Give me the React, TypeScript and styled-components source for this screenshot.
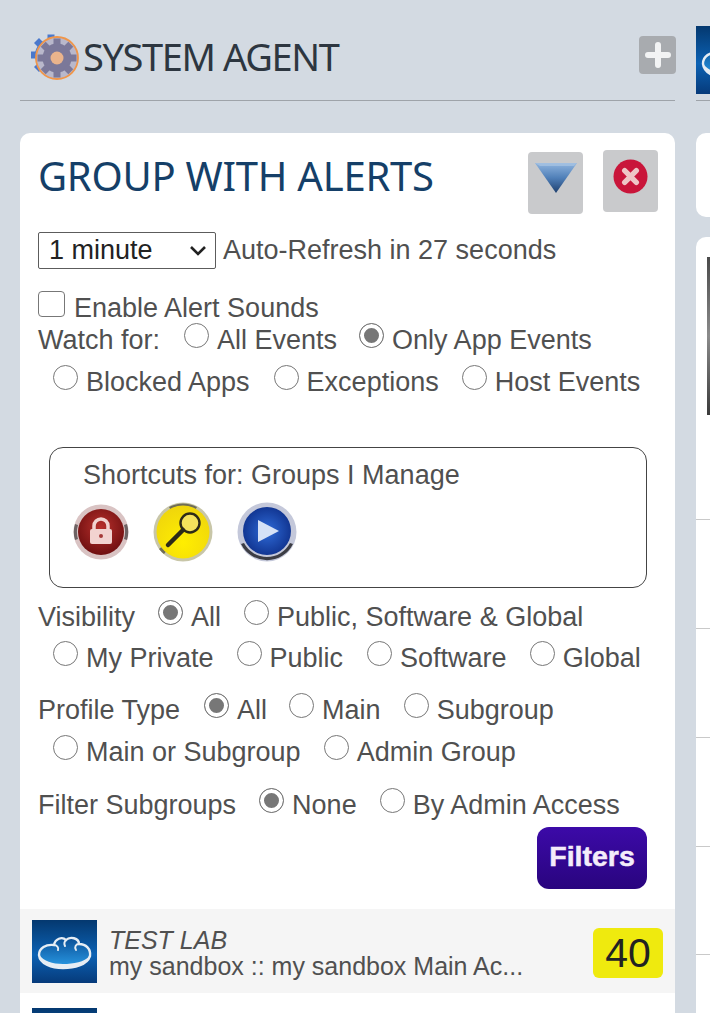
import styled, { createGlobalStyle } from "styled-components";

const GlobalStyle = createGlobalStyle`
  html, body {
    margin: 0;
    background: #d3dae2;
    overflow: hidden;
  }
  * { box-sizing: border-box; }
`;

const TEETH = [0, 45, 90, 135, 180, 225, 270, 315];

function CogIcon() {
  return (
    <svg width="50" height="50" viewBox="0 0 50 50">
      <g fill="#4a78cc">
        <circle cx="20" cy="23" r="16" />
        {TEETH.map(a => (
          <rect key={a} x="16.5" y="2.5" width="7" height="8" transform={`rotate(${a} 20 23)`} />
        ))}
      </g>
      <circle cx="26" cy="26" r="21" fill="#b9b8cb" stroke="#f0964a" strokeWidth="1.8" />
      <g fill="#7b7899">
        <circle cx="26" cy="26" r="14.5" />
        {TEETH.map(a => (
          <rect key={a} x="22.5" y="6.5" width="7" height="7" transform={`rotate(${a} 26 26)`} />
        ))}
      </g>
      <circle cx="26" cy="26" r="6.5" fill="#eab48c" />
    </svg>
  );
}

function PlusIcon() {
  return (
    <svg width="26" height="26" viewBox="0 0 26 26">
      <path d="M13 3v20M3 13h20" stroke="#f2f3f4" strokeWidth="6" strokeLinecap="round" />
    </svg>
  );
}

function TriangleIcon() {
  return (
    <svg width="44" height="32" viewBox="0 0 44 32">
      <defs>
        <linearGradient id="tri" x1="0" y1="0" x2="0" y2="1">
          <stop offset="0" stopColor="#8fb4de" />
          <stop offset=".5" stopColor="#4f7fb8" />
          <stop offset="1" stopColor="#1d3f6e" />
        </linearGradient>
      </defs>
      <path d="M1 1h42L22 31z" fill="url(#tri)" />
      <path d="M1 1h42l-3 3H6z" fill="#a9c4e2" opacity=".7" />
    </svg>
  );
}

function CloseIcon() {
  return (
    <svg width="35" height="35" viewBox="0 0 36 36">
      <circle cx="18" cy="18" r="17.5" fill="#c9153a" />
      <path d="M12 12l12 12M24 12L12 24" stroke="#eec6c6" strokeWidth="5.5" strokeLinecap="round" />
    </svg>
  );
}

function LockIcon() {
  return (
    <svg width="56" height="56" viewBox="0 0 56 56">
      <defs>
        <radialGradient id="red" cx=".5" cy=".4" r=".6">
          <stop offset="0" stopColor="#b8302c" />
          <stop offset="1" stopColor="#6f0f10" />
        </radialGradient>
      </defs>
      <circle cx="28" cy="28" r="27.5" fill="#d9c3c3" />
      <path d="M2 36a27 27 0 0 1 0-16l3 1a24 24 0 0 0 0 14zM54 36a27 27 0 0 0 0-16l-3 1a24 24 0 0 1 0 14z" fill="#6c6263" />
      <circle cx="28" cy="28" r="23" fill="url(#red)" />
      <path d="M21 27v-5a7 7 0 0 1 14 0v5" fill="none" stroke="#f2d3d0" strokeWidth="3.5" />
      <rect x="17" y="25" width="22" height="15" rx="2" fill="#f2d3d0" />
      <circle cx="28" cy="32" r="2" fill="#a53a38" />
    </svg>
  );
}

function SearchIcon() {
  return (
    <svg width="60" height="60" viewBox="0 0 60 60">
      <defs>
        <radialGradient id="yel" cx=".5" cy=".7" r=".7">
          <stop offset="0" stopColor="#ffee00" />
          <stop offset="1" stopColor="#efd50c" />
        </radialGradient>
      </defs>
      <circle cx="30" cy="30" r="29.5" fill="#c8c6a8" />
      <path d="M16 5a29 29 0 0 1 28 0l-1.500 2.500a26 26 0 0 0-25 0zM6 47a29 29 0 0 0 5 5l2-2.500a26 26 0 0 1-4.500-4.500z" fill="#6f6d58" />
      <circle cx="30" cy="30" r="26.5" fill="url(#yel)" />
      <circle cx="37" cy="21" r="9.5" fill="#f4e25c" stroke="#2d2a18" strokeWidth="2.4" />
      <path d="M30 28L15 43" stroke="#2d2a18" strokeWidth="4.5" strokeLinecap="round" />
    </svg>
  );
}

function PlayIcon() {
  return (
    <svg width="60" height="60" viewBox="0 0 60 60">
      <defs>
        <radialGradient id="blu" cx=".5" cy=".5" r=".55">
          <stop offset="0" stopColor="#2f6bd8" />
          <stop offset="1" stopColor="#0f318c" />
        </radialGradient>
      </defs>
      <circle cx="30" cy="30" r="29.5" fill="#c4c8da" />
      <path d="M4 42a29 29 0 0 0 52 0l-3-1a26 26 0 0 1-46 0z" fill="#3c3d44" />
      <circle cx="30" cy="29" r="24" fill="url(#blu)" />
      <path d="M21 18l21 11-21 11z" fill="#d6e2f6" />
    </svg>
  );
}

function CloudThumb({ height = 63, id }: { height?: number; id: string }) {
  return (
    <svg width="65" height={height} viewBox="0 0 65 63" preserveAspectRatio="none">
      <defs>
        <linearGradient id={id} x1="0" y1="0" x2="0" y2="1">
          <stop offset="0" stopColor="#04386f" />
          <stop offset=".55" stopColor="#0c62b4" />
          <stop offset="1" stopColor="#063a7a" />
        </linearGradient>
        <linearGradient id={`${id}-fill`} x1="0" y1="0" x2="0" y2="1">
          <stop offset="0" stopColor="#0a4f96" />
          <stop offset="1" stopColor="#2a9be6" />
        </linearGradient>
      </defs>
      <rect width="65" height="63" fill={`url(#${id})`} />
      <path
        d="M7 35C7 28 14 24 22 25 23 19 30 16 34 20 38 16 47 18 47 24 54 24 59 29 58 36 55 45 42 48 31 48 20 48 8 44 7 35z"
        fill={`url(#${id}-fill)`}
        stroke="#e6edf4"
        strokeWidth="2.4"
      />
      <path d="M7 35C8 44 20 48 31 48 42 48 55 45 58 36 52 42 42 44 31 44 20 44 12 41 7 35z" fill="#e6edf4" />
      <path d="M22 25c3 0 5 3 4 5M47 24c-3 0-5 3-3 6M34 20c-2 2-2 4-1 6" fill="none" stroke="#e6edf4" strokeWidth="2" strokeLinecap="round" />
    </svg>
  );
}

const Page = styled.div`
  display: flex;
  gap: 21px;
  width: 710px;
  height: 1013px;
  padding-left: 20px;
  overflow: hidden;
  font-family: "Liberation Sans", Arial, sans-serif;
  color: #505050;
`;

const LeftColumn = styled.div`
  flex: none;
  width: 655px;
`;

const RightColumn = styled.div`
  flex: none;
  width: 60px;
`;

const Header = styled.header`
  display: flex;
  align-items: center;
  height: 101px;
  padding: 13px 0 0 11px;
  border-bottom: 1px solid #9ea3a9;
`;

const AgentTitle = styled.h1`
  flex: 1;
  margin: 0 0 2px 2px;
  font-family: "Noto Sans", sans-serif;
  font-size: 38px;
  font-weight: 400;
  letter-spacing: -1.4px;
  color: #2d3640;
`;

const AddButton = styled.div`
  display: flex;
  align-items: center;
  justify-content: center;
  width: 37px;
  height: 38px;
  margin-right: -1px;
  margin-top: -3px;
  border-radius: 4px;
  background: #a8abaf;
`;

const Panel = styled.section`
  height: 900px;
  margin-top: 32px;
  background: #fff;
  border-radius: 10px;
  overflow: hidden;
`;

const PanelHead = styled.div`
  display: flex;
  align-items: flex-start;
  height: 99px;
  padding: 17px 0 0 18px;
`;

const PanelTitle = styled.h2`
  flex: 1;
  margin: 0;
  font-family: "Noto Sans", sans-serif;
  font-size: 40px;
  line-height: 51px;
  font-weight: 400;
  letter-spacing: -0.25px;
  color: #153f68;
`;

const HeadButton = styled.div<{ $w: number; $h: number; $right: number; $top: number }>`
  display: flex;
  align-items: center;
  justify-content: center;
  width: ${p => p.$w}px;
  height: ${p => p.$h}px;
  margin-right: ${p => p.$right}px;
  margin-top: ${p => p.$top}px;
  padding-bottom: 10px;
  border-radius: 4px;
  background: #c9cacc;
`;

const Body = styled.div`
  padding-left: 18px;
  font-size: 27px;
`;

const Row = styled.div<{ $h: number; $top?: number }>`
  display: flex;
  align-items: center;
  height: ${p => p.$h}px;
  margin-top: ${p => p.$top ?? 0}px;
  white-space: nowrap;
`;

const FakeSelect = styled.div`
  display: flex;
  align-items: center;
  justify-content: space-between;
  width: 178px;
  height: 37px;
  margin-right: 7px;
  padding: 0 8px 0 10px;
  border: 1px solid #5c5c5c;
  border-radius: 2px;
  color: #222;
`;

const Checkbox = styled.input`
  appearance: none;
  flex: none;
  width: 27px;
  height: 26px;
  margin: 0 9px 8px 0;
  border: 1.5px solid #777;
  border-radius: 4px;
  background: #fff;
`;

const RadioInput = styled.input`
  appearance: none;
  flex: none;
  width: 25px;
  height: 25px;
  margin: 0 8px 10px 0;
  border: 1.5px solid #777;
  border-radius: 50%;
  background: #fff;

  &:checked {
    background: #777;
    box-shadow: inset 0 0 0 4px #fff;
  }
`;

const RadioGroup = styled.label<{ $left: number }>`
  display: flex;
  align-items: center;
  margin-left: ${p => p.$left}px;
`;

const ShortcutBox = styled.div`
  height: 141px;
  margin: 39px 28px 0 11px;
  padding: 12px 0 0 33px;
  border: 1.5px solid #444;
  border-radius: 14px;
`;

const ShortcutIcons = styled.div`
  display: flex;
  align-items: center;
  gap: 24px;
  margin: 11px 0 0 -10px;
`;

const ButtonRow = styled.div`
  display: flex;
  justify-content: flex-end;
  margin: 1px 28px 0 0;
`;

const FiltersButton = styled.button`
  width: 110px;
  height: 62px;
  padding: 0 0 4px;
  border: 0;
  border-radius: 12px;
  background: linear-gradient(#3c0aa8, #29047e);
  color: #f4ecfa;
  font-family: "Liberation Sans", sans-serif;
  font-size: 28.5px;
  font-weight: 700;
  -webkit-text-stroke: 0.5px #f4ecfa;
`;

const ListRow = styled.div<{ $shade?: boolean; $top?: number }>`
  display: flex;
  align-items: center;
  height: 84px;
  margin-top: ${p => p.$top ?? 0}px;
  padding: 0 12px;
  background: ${p => (p.$shade ? "#f5f5f5" : "#fff")};
`;

const ListText = styled.div`
  flex: 1;
  min-width: 0;
  padding: 4px 0 0 12px;
  font-size: 25px;
  line-height: 26px;
`;

const ListName = styled.div`
  font-style: italic;
`;

const ListSub = styled.div`
  white-space: nowrap;
`;

const CountBadge = styled.div`
  display: flex;
  align-items: center;
  justify-content: center;
  width: 70px;
  height: 50px;
  margin-top: 4px;
  border-radius: 6px;
  background: #efea0e;
  color: #222;
  font-size: 41px;
`;

const SideThumb = styled.div`
  width: 60px;
  height: 68px;
  margin-top: 26px;
  overflow: hidden;
`;

const SideRule = styled.div`
  height: 1px;
  margin-top: 6px;
  background: #9ea3a9;
`;

const SideCard = styled.div`
  height: 84px;
  margin-top: 32px;
  background: #fff;
  border-radius: 10px 0 0 10px;
`;

const SideList = styled.div`
  height: 800px;
  margin-top: 20px;
  padding-top: 20px;
  background: #fff;
  border-radius: 10px 0 0 0;
`;

const SidePreview = styled.div`
  width: 3px;
  height: 158px;
  margin-left: 11px;
  background: linear-gradient(#4a4a4a, #8b8b8b 50%, #3a3a3a);
`;

const SideDivider = styled.div<{ $gap: number }>`
  height: 1px;
  margin-top: ${p => p.$gap}px;
  background: #c9c9c9;
`;

type RadioDef = { label: string; left: number; checked?: boolean };

function Radios({ name, items }: { name: string; items: RadioDef[] }) {
  return (
    <>
      {items.map(item => (
        <RadioGroup key={item.label} $left={item.left}>
          <RadioInput type="radio" name={name} defaultChecked={item.checked} />
          {item.label}
        </RadioGroup>
      ))}
    </>
  );
}

export default function App() {
  return (
    <Page>
      <GlobalStyle />
      <LeftColumn>
        <Header>
          <CogIcon />
          <AgentTitle>SYSTEM AGENT</AgentTitle>
          <AddButton>
            <PlusIcon />
          </AddButton>
        </Header>
        <Panel>
          <PanelHead>
            <PanelTitle>GROUP WITH ALERTS</PanelTitle>
            <HeadButton $w={55} $h={62} $right={20} $top={2}>
              <TriangleIcon />
            </HeadButton>
            <HeadButton $w={55} $h={62} $right={17} $top={0}>
              <CloseIcon />
            </HeadButton>
          </PanelHead>
          <Body>
            <Row $h={37}>
              <FakeSelect>
                1 minute
                <svg width="18" height="12" viewBox="0 0 18 12">
                  <path d="M2 2l7 7 7-7" fill="none" stroke="#222" strokeWidth="2.6" />
                </svg>
              </FakeSelect>
              Auto-Refresh in 27 seconds
            </Row>
            <Row $h={32} $top={23}>
              <Checkbox type="checkbox" />
              Enable Alert Sounds
            </Row>
            <Row $h={32}>
              Watch for:
              <Radios
                name="watch"
                items={[
                  { label: "All Events", left: 24 },
                  { label: "Only App Events", left: 22, checked: true },
                ]}
              />
            </Row>
            <Row $h={52}>
              <Radios
                name="watch"
                items={[
                  { label: "Blocked Apps", left: 15 },
                  { label: "Exceptions", left: 24 },
                  { label: "Host Events", left: 23 },
                ]}
              />
            </Row>
            <ShortcutBox>
              Shortcuts for: Groups I Manage
              <ShortcutIcons>
                <LockIcon />
                <SearchIcon />
                <PlayIcon />
              </ShortcutIcons>
            </ShortcutBox>
            <Row $h={42} $top={8}>
              Visibility
              <Radios
                name="visibility"
                items={[
                  { label: "All", left: 23, checked: true },
                  { label: "Public, Software & Global", left: 23 },
                ]}
              />
            </Row>
            <Row $h={41}>
              <Radios
                name="visibility"
                items={[
                  { label: "My Private", left: 15 },
                  { label: "Public", left: 23 },
                  { label: "Software", left: 24 },
                  { label: "Global", left: 23 },
                ]}
              />
            </Row>
            <Row $h={42} $top={10}>
              Profile Type
              <Radios
                name="profile"
                items={[
                  { label: "All", left: 24, checked: true },
                  { label: "Main", left: 22 },
                  { label: "Subgroup", left: 23 },
                ]}
              />
            </Row>
            <Row $h={42}>
              <Radios
                name="profile"
                items={[
                  { label: "Main or Subgroup", left: 15 },
                  { label: "Admin Group", left: 23 },
                ]}
              />
            </Row>
            <Row $h={42} $top={11}>
              Filter Subgroups
              <Radios
                name="subgroups"
                items={[
                  { label: "None", left: 23, checked: true },
                  { label: "By Admin Access", left: 23 },
                ]}
              />
            </Row>
            <ButtonRow>
              <FiltersButton>Filters</FiltersButton>
            </ButtonRow>
          </Body>
          <ListRow $shade $top={20}>
            <CloudThumb id="thumb-a" />
            <ListText>
              <ListName>TEST LAB</ListName>
              <ListSub>my sandbox :: my sandbox Main Ac...</ListSub>
            </ListText>
            <CountBadge>40</CountBadge>
          </ListRow>
          <ListRow $top={4}>
            <CloudThumb id="thumb-b" />
          </ListRow>
        </Panel>
      </LeftColumn>
      <RightColumn>
        <SideThumb>
          <CloudThumb id="thumb-c" height={68} />
        </SideThumb>
        <SideRule />
        <SideCard />
        <SideList>
          <SidePreview />
          <SideDivider $gap={104} />
          <SideDivider $gap={108} />
          <SideDivider $gap={108} />
          <SideDivider $gap={108} />
          <SideDivider $gap={107} />
        </SideList>
      </RightColumn>
    </Page>
  );
}
